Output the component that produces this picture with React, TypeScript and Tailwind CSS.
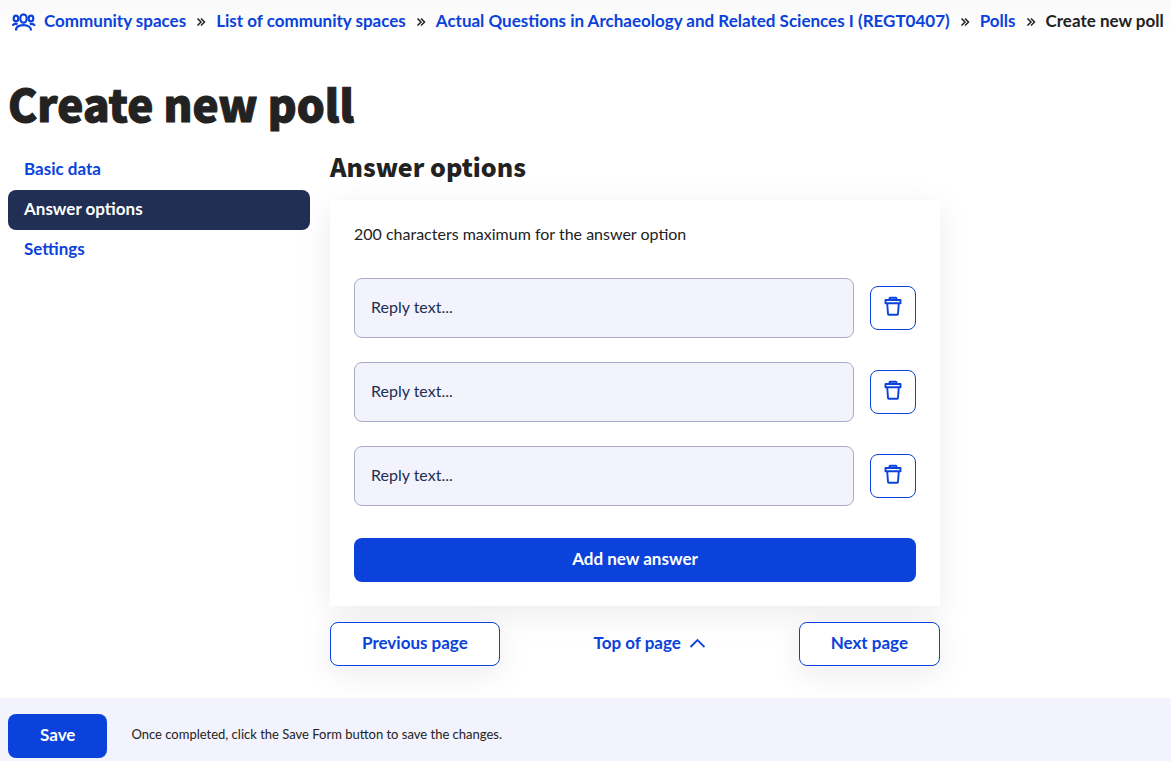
import { useState } from "react";

interface Crumb {
  label: string;
  href: string;
}

const crumbs: Crumb[] = [
  { label: "Community spaces", href: "#community" },
  { label: "List of community spaces", href: "#spaces" },
  { label: "Actual Questions in Archaeology and Related Sciences I (REGT0407)", href: "#space" },
  { label: "Polls", href: "#polls" },
];

const steps = ["Basic data", "Answer options", "Settings"];

const outlineButton =
  "h-11 rounded-lg border border-[#0a42db] bg-white px-[31px] pb-0.5 text-[17px] font-bold text-[#0a42db] shadow-[0_8px_32px_rgba(0,0,0,0.08)]";

function PeopleIcon() {
  return (
    <svg className="mt-0.5 h-5 w-6 shrink-0" viewBox="0 0 24 20" fill="none" stroke="currentColor" strokeWidth="2.200" aria-hidden="true">
      <ellipse cx="11.500" cy="6.500" rx="3.200" ry="4.200" />
      <ellipse cx="4" cy="6.500" rx="2.300" ry="2.800" />
      <ellipse cx="19" cy="6.500" rx="2.300" ry="2.800" />
      <path d="M4 18.500c0-3.300 3-5.300 7.500-5.300s7.500 2 7.500 5.300M.5 13.800c.8-2 2.700-2.400 5-1.700M22.800 13.800c-.8-2-2.700-2.400-5-1.700" />
    </svg>
  );
}

function Separator() {
  return (
    <svg className="mt-px h-2 w-2.5 shrink-0" viewBox="0 0 8 8" fill="none" stroke="currentColor" strokeWidth="1.500" aria-hidden="true">
      <path d="M.5.5 4 4 .5 7.500M4 .5 7.500 4 4 7.500" />
    </svg>
  );
}

function TrashIcon() {
  return (
    <svg className="mb-1 h-5 w-5" viewBox="0 0 20 20" fill="none" stroke="currentColor" strokeWidth="1.900" strokeLinejoin="round" aria-hidden="true">
      <path d="M6.500 4V2.500c0-.5.300-.8.800-.8h5.400c.5 0 .8.300.8.800V4M2.500 4h15v3.300h-15zM4.200 7.300l.8 10.500c0 .5.400.9.900.9h8.200c.5 0 .9-.4.900-.9l.8-10.500" />
    </svg>
  );
}

function ChevronUp() {
  return (
    <svg className="h-4 w-4" viewBox="0 0 16 16" fill="none" stroke="currentColor" strokeWidth="1.800" aria-hidden="true">
      <path d="M1.500 12 8.500 5l7 7" />
    </svg>
  );
}

export default function App() {
  const [answers, setAnswers] = useState(["", "", ""]);

  const updateAnswer = (index: number, value: string) =>
    setAnswers((list) => list.map((a, i) => (i === index ? value : a)));
  const removeAnswer = (index: number) => setAnswers((list) => list.filter((_, i) => i !== index));

  return (
    <div className="flex min-h-screen flex-col bg-white font-[Lato,sans-serif] text-base leading-6 text-[#222222]">
      {/* Breadcrumbs */}
      <nav aria-label="Breadcrumb" className="bg-linear-to-b from-[#f9f9f9] to-white px-2 pt-[9px]">
        <ol className="flex items-center gap-2.5 text-[17px] font-bold whitespace-nowrap">
          {crumbs.map((crumb, i) => (
            <li key={crumb.href} className="flex items-center gap-2.5">
              <a href={crumb.href} className="flex items-center gap-2 text-[#0a42db]">
                {i === 0 && (
                  <span className="pl-1">
                    <PeopleIcon />
                  </span>
                )}
                {crumb.label}
              </a>
              <Separator />
            </li>
          ))}
          <li aria-current="page">Create new poll</li>
        </ol>
      </nav>

      <main className="flex-1 px-2 pt-10 pb-8">
        <h1 className="font-['Noto_Sans_CJK_SC',sans-serif] text-[44px] leading-[60px] font-black [-webkit-text-stroke:1px]">
          Create new poll
        </h1>

        <div className="mt-4 flex items-start gap-5">
          <nav aria-label="Form pages" className="w-[302px] shrink-0 pt-px">
            {steps.map((step) => (
              <a
                key={step}
                href={`#${step}`}
                className={
                  step === "Answer options"
                    ? "block rounded-lg bg-[#212f54] px-4 pt-[7px] pb-[9px] text-[17px] font-bold text-white"
                    : "block px-4 pt-[7px] pb-[9px] text-[17px] font-bold text-[#0a42db]"
                }
              >
                {step}
              </a>
            ))}
          </nav>

          <div className="w-full max-w-[610px]">
            <h2 className="font-['Noto_Sans_CJK_SC',sans-serif] text-[25px] leading-[35px] font-black">Answer options</h2>

            <section className="mt-4 bg-white p-6 shadow-[0_8px_32px_rgba(0,0,0,0.08)]">
              <p className="pb-0.5 leading-5">200 characters maximum for the answer option</p>
              <div className="mt-8 flex flex-col gap-6">
                {answers.map((answer, i) => (
                  <div key={i} className="flex items-center gap-4">
                    <input
                      type="text"
                      aria-label={`Answer option ${i + 1}`}
                      placeholder="Reply text..."
                      maxLength={200}
                      value={answer}
                      onChange={(e) => updateAnswer(i, e.target.value)}
                      className="h-15 min-w-0 flex-1 rounded-lg border border-[#a9abc9] bg-[#f2f3fc] px-4 pb-1 placeholder:text-[#212f54]"
                    />
                    <button
                      type="button"
                      aria-label="Delete answer"
                      onClick={() => removeAnswer(i)}
                      className="flex h-11 w-[46px] items-center justify-center rounded-lg border border-[#0a42db] bg-white text-[#0a42db]"
                    >
                      <TrashIcon />
                    </button>
                  </div>
                ))}
              </div>
              <button
                type="button"
                onClick={() => setAnswers((list) => [...list, ""])}
                className="mt-8 h-11 w-full rounded-lg bg-[#0a42db] pb-0.5 text-[17px] font-bold text-white"
              >
                Add new answer
              </button>
            </section>

            <div className="mt-4 flex items-center justify-between">
              <button type="button" className={outlineButton}>
                Previous page
              </button>
              <a href="#top" className="flex items-center gap-2 pb-0.5 text-[17px] font-bold text-[#0a42db]">
                Top of page
                <ChevronUp />
              </a>
              <button type="button" className={outlineButton}>
                Next page
              </button>
            </div>
          </div>
        </div>
      </main>

      <footer className="flex items-start gap-6 bg-[#f2f3fc] px-2 pt-4 pb-[3px]">
        <button type="button" className="h-11 rounded-lg bg-[#0a42db] px-8 pb-0.5 text-[17px] font-bold text-white">
          Save
        </button>
        <p className="pt-2 text-[13px]">Once completed, click the Save Form button to save the changes.</p>
      </footer>
    </div>
  );
}
